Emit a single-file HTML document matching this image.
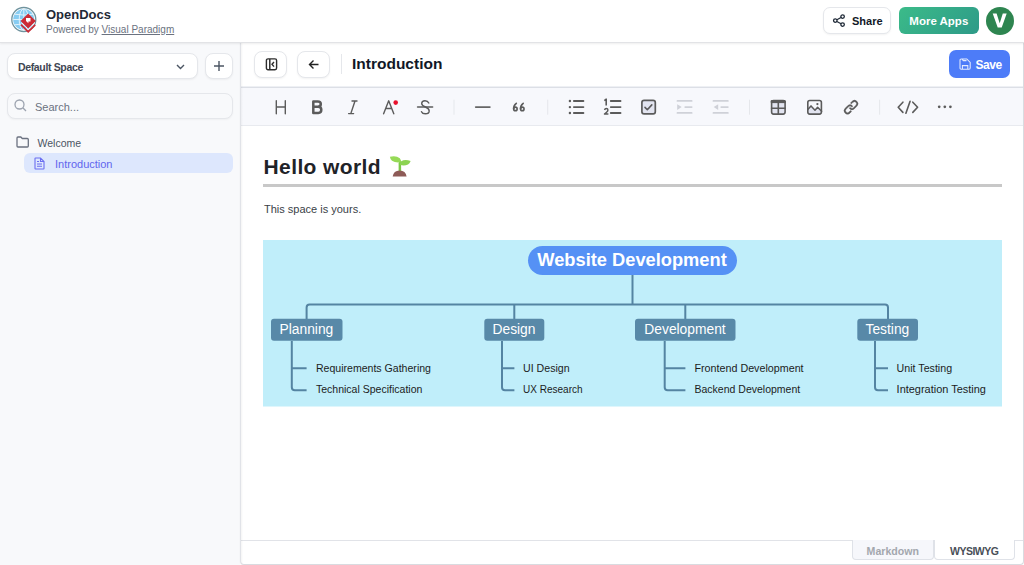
<!DOCTYPE html>
<html><head><meta charset="utf-8">
<style>
*{box-sizing:border-box;margin:0;padding:0}
html,body{width:1024px;height:565px;overflow:hidden;background:#fff;font-family:"Liberation Sans",sans-serif}
.abs{position:absolute}
#header{position:absolute;left:0;top:0;width:1024px;height:43px;background:#fff;border-bottom:1px solid #e2e3e6;box-shadow:0 1px 2px rgba(0,0,0,0.07);z-index:2}
#sidebar{position:absolute;left:0;top:42px;width:240px;height:523px;background:#f8f9fb}
#main{position:absolute;left:240px;top:42px;width:784px;height:523px;background:#fff;border-left:1px solid #e1e3e8;border-right:1px solid #d9dbe0;border-bottom:1px solid #d9dbe0;border-radius:0 0 4px 4px;box-shadow:0 0 2px rgba(0,0,0,0.06)}
.txt{position:absolute;white-space:nowrap;line-height:1}
.btn{position:absolute;background:#fff;border:1px solid #e5e7eb;border-radius:7px;box-shadow:0 1px 2px rgba(0,0,0,0.05)}
svg{position:absolute;overflow:visible}
</style></head><body>
<div id="header">
  <!-- logo -->
  <svg style="left:0;top:0" width="45" height="42" viewBox="0 0 45 42">
    <circle cx="23.8" cy="19.5" r="12" fill="#fff" stroke="#6f939e" stroke-width="1.3"/>
    <circle cx="23.8" cy="19.5" r="10.6" fill="#86ccf2"/>
    <g stroke="#e8f5fd" stroke-width="0.9" fill="none">
      <ellipse cx="23.8" cy="19.5" rx="4.6" ry="10.6"/>
      <line x1="13.2" y1="19.5" x2="34.4" y2="19.5"/>
      <path d="M14.5 14.2 Q23.8 16 33.1 14.2 M14.5 24.8 Q23.8 23 33.1 24.8"/>
      <line x1="23.8" y1="9" x2="23.8" y2="30"/>
    </g>
    <path d="M20.6 21 L28.2 13.6 L35.8 21.1 L28.2 28.5 Z" fill="#cc2b36"/>
    <path d="M21 24.6 L28.2 31.8 L35.2 24.8" fill="none" stroke="#cc2b36" stroke-width="1.8"/>
    <path d="M21.4 22.4 L28.2 29.2 L35 22.5" fill="none" stroke="#fff" stroke-width="0.6"/>
    <path d="M26 17.9 H30.5 V21.4 H28.4 V23.2 L26 21 Z" fill="#fff"/>
  </svg>
  <div class="txt" style="left:46px;top:7.8px;font-size:13px;font-weight:bold;color:#1f2937">OpenDocs</div>
  <div class="txt" style="left:46px;top:24.5px;font-size:10px;color:#6b7280">Powered by <span style="text-decoration:underline;color:#6b7280">Visual Paradigm</span></div>

  <div class="btn" style="left:823px;top:7px;width:68px;height:27px;border-radius:7px"></div>
  <svg style="left:833px;top:14px" width="13" height="13" viewBox="0 0 13 13">
    <g fill="none" stroke="#1f2937" stroke-width="1.3">
      <circle cx="2.3" cy="6.6" r="1.75"/><circle cx="9.6" cy="2.6" r="1.75"/><circle cx="9.6" cy="10.6" r="1.75"/>
      <line x1="3.9" y1="5.7" x2="8" y2="3.5"/><line x1="3.9" y1="7.5" x2="8" y2="9.7"/>
    </g>
  </svg>
  <div class="txt" style="left:852px;top:15.6px;font-size:11px;font-weight:bold;color:#111827">Share</div>

  <div class="abs" style="left:899px;top:7px;width:80px;height:27px;border-radius:6px;background:linear-gradient(135deg,#3bbb89,#2e9a88)"></div>
  <div class="txt" style="left:909.3px;top:15.6px;font-size:11.5px;font-weight:bold;color:#fff">More Apps</div>
  <div class="abs" style="left:986px;top:7px;width:28px;height:28px;border-radius:50%;background:#2e8550"></div>
  <svg style="left:0;top:0" width="1024" height="42"><path d="M992.7 13.5 H996.6 L999.7 23.3 L1002.8 13.5 H1006.7 L1001.7 27.6 H997.7 Z" fill="#fff"/></svg>
</div>

<div id="sidebar">
  <div class="btn" style="left:7px;top:11.2px;width:191px;height:25.5px;border-radius:8px"></div>
  <div class="txt" style="left:18px;top:20.3px;font-size:10.5px;font-weight:bold;letter-spacing:-0.35px;color:#3f4653">Default Space</div>
  <svg style="left:176px;top:22px" width="9" height="6" viewBox="0 0 9 6"><path d="M1 1 L4.5 4.5 L8 1" fill="none" stroke="#4b5563" stroke-width="1.4"/></svg>
  <div class="btn" style="left:205px;top:11.2px;width:27.5px;height:25.5px;border-radius:8px"></div>
  <svg style="left:213px;top:18px" width="12" height="12" viewBox="0 0 12 12"><path d="M6 1 V11 M1 6 H11" stroke="#4b5563" stroke-width="1.4"/></svg>

  <div class="abs" style="left:7px;top:51px;width:225.5px;height:26px;border-radius:8px;border:1px solid #e5e7eb;background:#f8f9fb;box-shadow:0 1px 2px rgba(0,0,0,0.04)"></div>
  <svg style="left:14px;top:57px" width="13" height="13" viewBox="0 0 13 13"><circle cx="5.5" cy="5.5" r="4.5" fill="none" stroke="#9ca3af" stroke-width="1.3"/><line x1="8.8" y1="8.8" x2="12" y2="12" stroke="#9ca3af" stroke-width="1.3"/></svg>
  <div class="txt" style="left:35px;top:59.5px;font-size:11px;color:#6b7280">Search...</div>

  <svg style="left:15.5px;top:94px" width="14" height="12" viewBox="0 0 14 12"><path d="M1 2 Q1 1 2 1 H4.8 L6.3 2.5 H11.3 Q12.3 2.5 12.3 3.5 V10 Q12.3 11 11.3 11 H2 Q1 11 1 10 Z" fill="none" stroke="#6b7280" stroke-width="1.3"/></svg>
  <div class="txt" style="left:37.5px;top:96px;font-size:10.5px;color:#4b5563">Welcome</div>

  <div class="abs" style="left:24px;top:111px;width:208.5px;height:20px;border-radius:6px;background:#dde7fd"></div>
  <svg style="left:34px;top:115px" width="11" height="13" viewBox="0 0 11 13"><path d="M1.5 1 H6.5 L10 4.5 V11.5 Q10 12 9.5 12 H1.5 Q1 12 1 11.5 V1.5 Q1 1 1.5 1 Z M6.5 1 V4.5 H10 M3 7 H8 M3 9.3 H8 M3 4.5 H5" fill="none" stroke="#6b6ef0" stroke-width="1.1"/></svg>
  <div class="txt" style="left:55px;top:116.5px;font-size:11px;color:#6165ee">Introduction</div>
</div>

<div id="main">
  <div class="btn" style="left:13px;top:8.8px;width:33px;height:27px;border-radius:8px"></div>
  <svg style="left:24px;top:16px" width="12" height="12" viewBox="0 0 12 12"><rect x="1.4" y="0.9" width="10.2" height="10.8" rx="1.6" fill="none" stroke="#2d2d2d" stroke-width="1.4"/><line x1="4.8" y1="1" x2="4.8" y2="11.6" stroke="#2d2d2d" stroke-width="1.5"/><path d="M9 4 L7 6.3 L9 8.6" fill="none" stroke="#2d2d2d" stroke-width="1.4"/></svg>
  <div class="btn" style="left:56px;top:8.8px;width:33px;height:27px;border-radius:8px"></div>
  <svg style="left:67px;top:17px" width="12" height="11" viewBox="0 0 12 11"><path d="M10.5 5.5 H1.5 M5.5 1.5 L1.5 5.5 L5.5 9.5" fill="none" stroke="#222" stroke-width="1.4"/></svg>
  <div class="abs" style="left:99.5px;top:12px;width:1px;height:20px;background:#e5e7eb"></div>
  <div class="txt" style="left:111px;top:14px;font-size:15.5px;font-weight:bold;color:#111827">Introduction</div>

  <div class="abs" style="left:708.2px;top:8.4px;width:61px;height:27.4px;border-radius:7px;background:#4d7cf8"></div>
  <svg style="left:717.5px;top:16px" width="13" height="13" viewBox="0 0 13 13"><path d="M1 2.2 Q1 1 2.2 1 H7.8 L11.2 4.4 V10 Q11.2 11.2 10 11.2 H2.2 Q1 11.2 1 10 Z M3.2 1 L4.2 2.6 H7.5 M3.4 11.2 V7.6 H8.8 V11.2" fill="none" stroke="rgba(255,255,255,0.85)" stroke-width="1.05"/></svg>
  <div class="txt" style="left:734.6px;top:16.9px;font-size:12px;letter-spacing:-0.5px;font-weight:bold;color:#fff">Save</div>

  <!-- toolbar -->
  <div class="abs" style="left:0;right:0;top:45px;height:39px;background:#f7f8fc;border-top:1px solid #dcdfe6;border-bottom:1px solid #e8eaef;box-shadow:0 -1px 0 #eef0f4"></div>

  <!-- content -->
  <div class="txt" style="left:22.5px;top:113.5px;font-size:21px;font-weight:bold;letter-spacing:0.4px;color:#1f2328">Hello world</div>
  <div class="abs" style="left:22px;top:142px;width:739px;height:3px;background:#c8c8c8"></div>
  <div class="txt" style="left:23px;top:161.8px;font-size:11px;color:#3a3f47">This space is yours.</div>

  <!-- footer -->
  <div class="abs" style="left:0;right:0;top:498px;height:1px;background:#e1e3e8"></div>
  <div class="abs" style="left:611px;top:498px;width:82px;height:20px;background:#f6f7fb;border:1px solid #dfe2e8;border-top:none;border-radius:0 0 4px 4px"></div>
  <div class="txt" style="left:625.6px;top:504.3px;font-size:10.6px;font-weight:bold;color:#a3a7ae">Markdown</div>
  <div class="abs" style="left:693px;top:498px;width:81px;height:20px;background:#fff;border:1px solid #dfe2e8;border-top:none;border-radius:0 0 4px 4px"></div>
  <div class="txt" style="left:709px;top:503.5px;font-size:10.5px;letter-spacing:-0.5px;font-weight:bold;color:#4a4f57">WYSIWYG</div>
  <div class="abs" style="left:0;top:0;bottom:0;width:2px;background:linear-gradient(90deg,rgba(0,0,0,0.045),rgba(0,0,0,0))"></div>
</div>

<svg style="left:0;top:0" width="1024" height="565" viewBox="0 0 1024 565">
 <g fill="none" stroke="#5b5b5b" stroke-linecap="round" stroke-linejoin="round">
  <!-- H -->
  <path d="M276.3 100.8 V113.8 M285.3 100.8 V113.8 M276.3 107 H285.3" stroke-width="1.4"/>
  <!-- B -->
  <path d="M313.3 101.5 H317.8 Q320.8 101.5 320.8 104.1 Q320.8 106.7 317.8 106.7 H313.3 M313.3 106.7 H318.3 Q321.3 106.7 321.3 109.8 Q321.3 112.9 318.3 112.9 H313.3 Z M313.3 101.5 V112.9" stroke-width="2.5"/>
  <!-- I -->
  <path d="M352 101 H357 M348.6 113.6 H353.6 M355 101 L350.8 113.6" stroke-width="1.4"/>
  <!-- A -->
  <path d="M383.6 113.8 L388.7 100.8 L393.8 113.8 M385.7 108.5 H391.7" stroke-width="1.4"/>
  <!-- S -->
  <path d="M428.8 103 Q427.8 100.8 425 100.8 Q421.7 100.8 421.7 103.6 Q421.7 105.5 425.4 107 Q429.2 108.6 429.2 111 Q429.2 113.8 425.3 113.8 Q422.4 113.8 421.5 111.7" stroke-width="1.4"/>
  <path d="M417.6 107 H432.6" stroke-width="1.6"/>
  <!-- hr -->
  <path d="M475.8 107.1 H489.8" stroke-width="1.9" stroke="#666"/>
  <!-- ul -->
  <path d="M573.9 101 H583.4 M573.9 107.1 H583.4 M573.9 113 H583.4 M610.8 101 H620.5 M610.8 107.1 H620.5 M610.8 113 H620.5" stroke-width="1.9"/>
  <!-- checkbox -->
  <rect x="641.9" y="100.3" width="13.4" height="13.6" rx="2.2" fill="#e2e4f0" stroke-width="1.7"/>
  <path d="M645 107.4 L647.3 109.7 L651.8 104.9" stroke-width="1.6"/>
  <!-- table -->
  <rect x="771.6" y="100.5" width="13.5" height="13.6" rx="2" fill="#e2e4f0" stroke-width="1.6"/>
  <path d="M771.6 101.8 H785.1 M778.3 102.5 V114 M771.6 108.2 H785.1" stroke-width="1.6"/>
  <path d="M771.6 100.5 H785.1 V102.6 H771.6 Z" fill="#5b5b5b" stroke-width="1"/>
  <!-- image -->
  <path d="M807.8 109.5 L811 105.9 L815 110.2 L817.6 107.2 L821.4 111 V113.9 H807.8 Z" fill="#e2e4f0" stroke="none"/>
  <rect x="807.8" y="100.5" width="13.6" height="13.6" rx="2" stroke-width="1.6"/>
  <path d="M807.8 109.5 L811 105.9 L815 110.2 L817.6 107.2 L821.6 111.2" stroke-width="1.5"/>
  <circle cx="817.4" cy="104.1" r="1.15" fill="#5b5b5b" stroke="none"/>
  <!-- link -->
  <!-- code -->
  <path d="M902.9 102.2 L898.2 107.2 L902.9 112.4 M912.8 102.2 L917.6 107.2 L912.8 112.4 M910.1 101.2 L905.9 113.3" stroke-width="1.6"/>
 </g>
 <path transform="translate(843.1,99.3) scale(0.99)" fill="#5b5b5b" stroke="#5b5b5b" stroke-width="0.35" d="M7.775 3.275a.75.75 0 001.06 1.06l1.25-1.25a2 2 0 112.83 2.83l-2.5 2.5a2 2 0 01-2.83 0 .75.75 0 00-1.06 1.06 3.5 3.5 0 004.95 0l2.5-2.5a3.5 3.5 0 00-4.95-4.95l-1.25 1.25zm-4.69 9.64a2 2 0 010-2.83l2.5-2.5a2 2 0 012.83 0 .75.75 0 001.06-1.06 3.5 3.5 0 00-4.95 0l-2.5 2.5a3.5 3.5 0 004.95 4.95l1.25-1.25a.75.75 0 00-1.06-1.06l-1.25 1.25a2 2 0 01-2.83 0z"/>
 <g fill="#5b5b5b">
  <circle cx="569.9" cy="101" r="1.2"/><circle cx="569.9" cy="107.1" r="1.2"/><circle cx="569.9" cy="113" r="1.2"/>
  <circle cx="939.2" cy="106.8" r="1.35"/><circle cx="944.8" cy="106.8" r="1.35"/><circle cx="950.4" cy="106.8" r="1.35"/>
  <circle cx="395.7" cy="102.6" r="2.3" fill="#e8112d"/>
 </g>
 <path d="M604.3 100.6 L606.2 99.2 V105.4" fill="none" stroke="#5b5b5b" stroke-width="1.6" stroke-linejoin="round"/>
 <path d="M604.6 110 Q604.9 108.4 606.3 108.4 Q607.9 108.4 607.9 110 Q607.9 111.1 606.6 112.2 L604.5 114.1 H608.4" fill="none" stroke="#5b5b5b" stroke-width="1.5" stroke-linejoin="round"/>
 <g fill="none" stroke="#5b5b5b" stroke-width="1.6" stroke-linecap="round">
  <circle cx="515.4" cy="108.9" r="1.75"/><path d="M513.65 109 Q513.4 105.5 516.3 103.3"/>
  <circle cx="522.3" cy="108.9" r="1.75"/><path d="M520.55 109 Q520.3 105.5 523.2 103.3"/>
 </g>
 <!-- indent / outdent -->
 <g stroke="#cfd1d8" stroke-width="1.9" stroke-linecap="round" fill="none">
  <path d="M677.5 100.9 H691.6 M677.5 112.9 H691.6 M685.3 107.1 H691.6"/>
  <path d="M713.5 100.9 H727.8 M713.5 112.9 H727.8 M721.3 107.1 H727.8"/>
 </g>
 <path d="M677.2 104.2 L681.7 107.1 L677.2 110 Z" fill="#cfd1d8"/>
 <path d="M718.2 104.2 L713.7 107.1 L718.2 110 Z" fill="#cfd1d8"/>
 <g fill="#e5e7eb">
  <rect x="453.5" y="99.7" width="1" height="15"/>
  <rect x="547.2" y="99.7" width="1" height="15"/>
  <rect x="749" y="99.7" width="1" height="15"/>
  <rect x="879.1" y="99.7" width="1" height="15"/>
 </g>
</svg>

<svg style="left:0;top:0" width="1024" height="565" viewBox="0 0 1024 565">
 <rect x="263" y="240" width="739" height="166.5" fill="#c0eefa"/>
 <rect x="528" y="246" width="209" height="29" rx="14.5" fill="#5591f5"/>
 <text x="632" y="266.3" text-anchor="middle" font-family="Liberation Sans" font-weight="bold" font-size="18" fill="#fff" textLength="189.5" lengthAdjust="spacingAndGlyphs">Website Development</text>
 <g fill="none" stroke="#5484a2" stroke-width="2">
  <path d="M632.5 275 V304.5"/>
  <path d="M306.6 319 V307.5 Q306.6 304.5 309.6 304.5 H885 Q888 304.5 888 307.5 V319"/>
  <path d="M514.3 304.5 V319 M685.3 304.5 V319"/>
  <path d="M291.8 341 V387.2 Q291.8 390.2 294.8 390.2 H306.6 M291.8 368.3 H306.6"/>
  <path d="M502 341 V387.2 Q502 390.2 505 390.2 H514.4 M502 368.3 H514.4"/>
  <path d="M664.7 341 V387.2 Q664.7 390.2 667.7 390.2 H685.4 M664.7 368.3 H685.4"/>
  <path d="M875 341 V387.2 Q875 390.2 878 390.2 H888 M875 368.3 H888"/>
 </g>
 <g fill="#5889a8">
  <rect x="271" y="318.8" width="71.5" height="22" rx="3"/>
  <rect x="484.3" y="318.8" width="60" height="22" rx="3"/>
  <rect x="635" y="318.8" width="100.5" height="22" rx="3"/>
  <rect x="857.3" y="318.8" width="60.7" height="22" rx="3"/>
 </g>
 <g font-family="Liberation Sans" font-size="13.8" fill="#fff" text-anchor="middle">
  <text x="306.4" y="334.1">Planning</text>
  <text x="514" y="334.1">Design</text>
  <text x="685" y="334.1">Development</text>
  <text x="887.4" y="334.1">Testing</text>
 </g>
 <g font-family="Liberation Sans" font-size="10.5" fill="#1c1c1c">
  <text x="315.9" y="371.7" textLength="115.1" lengthAdjust="spacingAndGlyphs">Requirements Gathering</text>
  <text x="315.9" y="393.1" textLength="106.5" lengthAdjust="spacingAndGlyphs">Technical Specification</text>
  <text x="523" y="371.7" textLength="46.6" lengthAdjust="spacingAndGlyphs">UI Design</text>
  <text x="523" y="393.1" textLength="59.6" lengthAdjust="spacingAndGlyphs">UX Research</text>
  <text x="694.5" y="371.7" textLength="109.1" lengthAdjust="spacingAndGlyphs">Frontend Development</text>
  <text x="694.5" y="393.1" textLength="105.7" lengthAdjust="spacingAndGlyphs">Backend Development</text>
  <text x="896.6" y="371.7" textLength="55.5" lengthAdjust="spacingAndGlyphs">Unit Testing</text>
  <text x="896.6" y="393.1" textLength="89.3" lengthAdjust="spacingAndGlyphs">Integration Testing</text>
 </g>
 <!-- emoji sprout -->
 <path d="M398.6 171.5 V163.5 Q398.6 161 401 160.5 L401.2 171.5 Z" fill="#7cc846"/>
 <path d="M389.9 156.8 Q396 155.2 399.8 158.3 Q401.5 160.2 400.8 162.3 Q395.5 163.2 392 160.8 Q390.2 159.3 389.9 156.8 Z" fill="#96da57"/>
 <path d="M410.6 161 Q405 159 401.2 161.2 Q399.5 162.8 400 165 Q404.5 166.2 408 164.5 Q410 163.3 410.6 161 Z" fill="#8cd352"/>
 <path d="M392.7 176.6 Q393.5 170.6 399.6 170.6 Q405.8 170.6 406.6 176.6 Z" fill="#8e5b57"/>
</svg>
</body></html>
